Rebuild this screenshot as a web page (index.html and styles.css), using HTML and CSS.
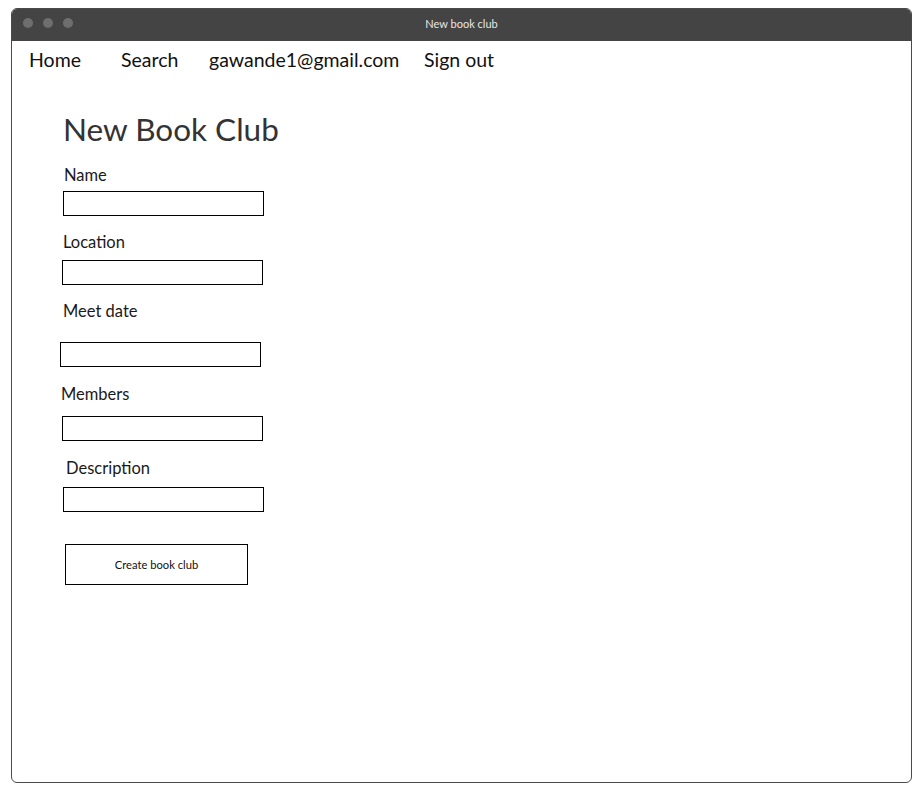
FILE: index.html
```html
<!DOCTYPE html>
<html lang="en">
<head>
<meta charset="utf-8">
<title>New book club</title>
<link rel="stylesheet" href="styles.css">
</head>
<body>
<div class="window">
  <div class="titlebar">
    <div class="dots"><span class="dot"></span><span class="dot"></span><span class="dot"></span></div>
    <div class="title">New book club</div>
  </div>
  <nav class="nav">
    <a class="nav-item nav-home">Home</a>
    <a class="nav-item nav-search">Search</a>
    <a class="nav-item nav-email">gawande1@gmail.com</a>
    <a class="nav-item nav-signout">Sign out</a>
  </nav>
  <main class="main">
    <h1 class="heading">New Book Club</h1>
    <form class="form">
      <div class="field field-name">
        <label class="label">Name</label>
        <input class="input" type="text">
      </div>
      <div class="field field-location">
        <label class="label">Location</label>
        <input class="input" type="text">
      </div>
      <div class="field field-date">
        <label class="label">Meet date</label>
        <input class="input" type="text">
      </div>
      <div class="field field-members">
        <label class="label">Members</label>
        <input class="input" type="text">
      </div>
      <div class="field field-description">
        <label class="label">Description</label>
        <input class="input" type="text">
      </div>
      <button class="button" type="button">Create book club</button>
    </form>
  </main>
</div>
</body>
</html>
```

FILE: styles.css
```css
html, body {
  margin: 0;
  padding: 0;
  background: #ffffff;
}

body {
  font-family: "Lato", "Noto Sans", sans-serif;
  color: #1a1a1a;
}

.window {
  margin: 8px 0 0 11px;
  width: 901px;
  height: 775px;
  box-sizing: border-box;
  border: 1px solid #4a4a4a;
  border-radius: 6px;
  overflow: hidden;
  background: #fff;
}

.titlebar {
  position: relative;
  height: 32px;
  background: #444444;
  display: flex;
  align-items: center;
  justify-content: center;
}

.dots {
  position: absolute;
  left: 11px;
  top: 9px;
  display: flex;
  gap: 10px;
}

.dot {
  width: 10px;
  height: 10px;
  border-radius: 50%;
  background: #6e6e6e;
}

.title {
  color: #e6e6e6;
  font-size: 11px;
  margin-top: -3px;
}

.nav {
  display: flex;
  padding: 2px 0 0 17px;
  height: 32px;
  align-items: center;
  font-size: 19.5px;
  color: #111;
}

.nav-item {
  display: block;
}

.nav-home { width: 92px; }
.nav-search { width: 88px; }
.nav-email { width: 215px; }

.main {
  padding: 34px 0 0 50px;
}

.heading {
  margin: 0 0 16px 1px;
  font-size: 31.5px;
  font-weight: 400;
  color: #333333;
  line-height: 40px;
}

.form {
  display: flex;
  flex-direction: column;
  align-items: flex-start;
}

.field {
  display: flex;
  flex-direction: column;
  align-items: flex-start;
  margin-bottom: 16px;
}

.label {
  display: block;
  font-size: 16.5px;
  line-height: 20px;
  margin: 0 0 6px 1px;
  color: #1a1a1a;
}

.input {
  display: block;
  box-sizing: border-box;
  width: 201px;
  height: 25px;
  margin: 0;
  border: 1px solid #000;
  border-radius: 0;
  padding: 0;
  background: #fff;
}

.field-name { margin-left: 1px; }

.field-location { margin-left: 0; }
.field-location .label { margin-bottom: 8px; }

.field-date { margin-left: -2px; margin-bottom: 17px; }
.field-date .label { margin-left: 3px; margin-bottom: 21px; }

.field-members { margin-left: 0; margin-bottom: 17px; }
.field-members .label { margin-left: -1px; margin-bottom: 12px; }

.field-description { margin-left: 1px; }
.field-description .label { margin-left: 3px; margin-bottom: 9px; }

.button {
  margin: 16px 0 0 3px;
  width: 183px;
  height: 41px;
  box-sizing: border-box;
  border: 1px solid #000;
  background: #fff;
  border-radius: 0;
  font-family: "Lato", "Noto Sans", sans-serif;
  font-size: 11.2px;
  color: #111;
  padding: 0;
}
```
